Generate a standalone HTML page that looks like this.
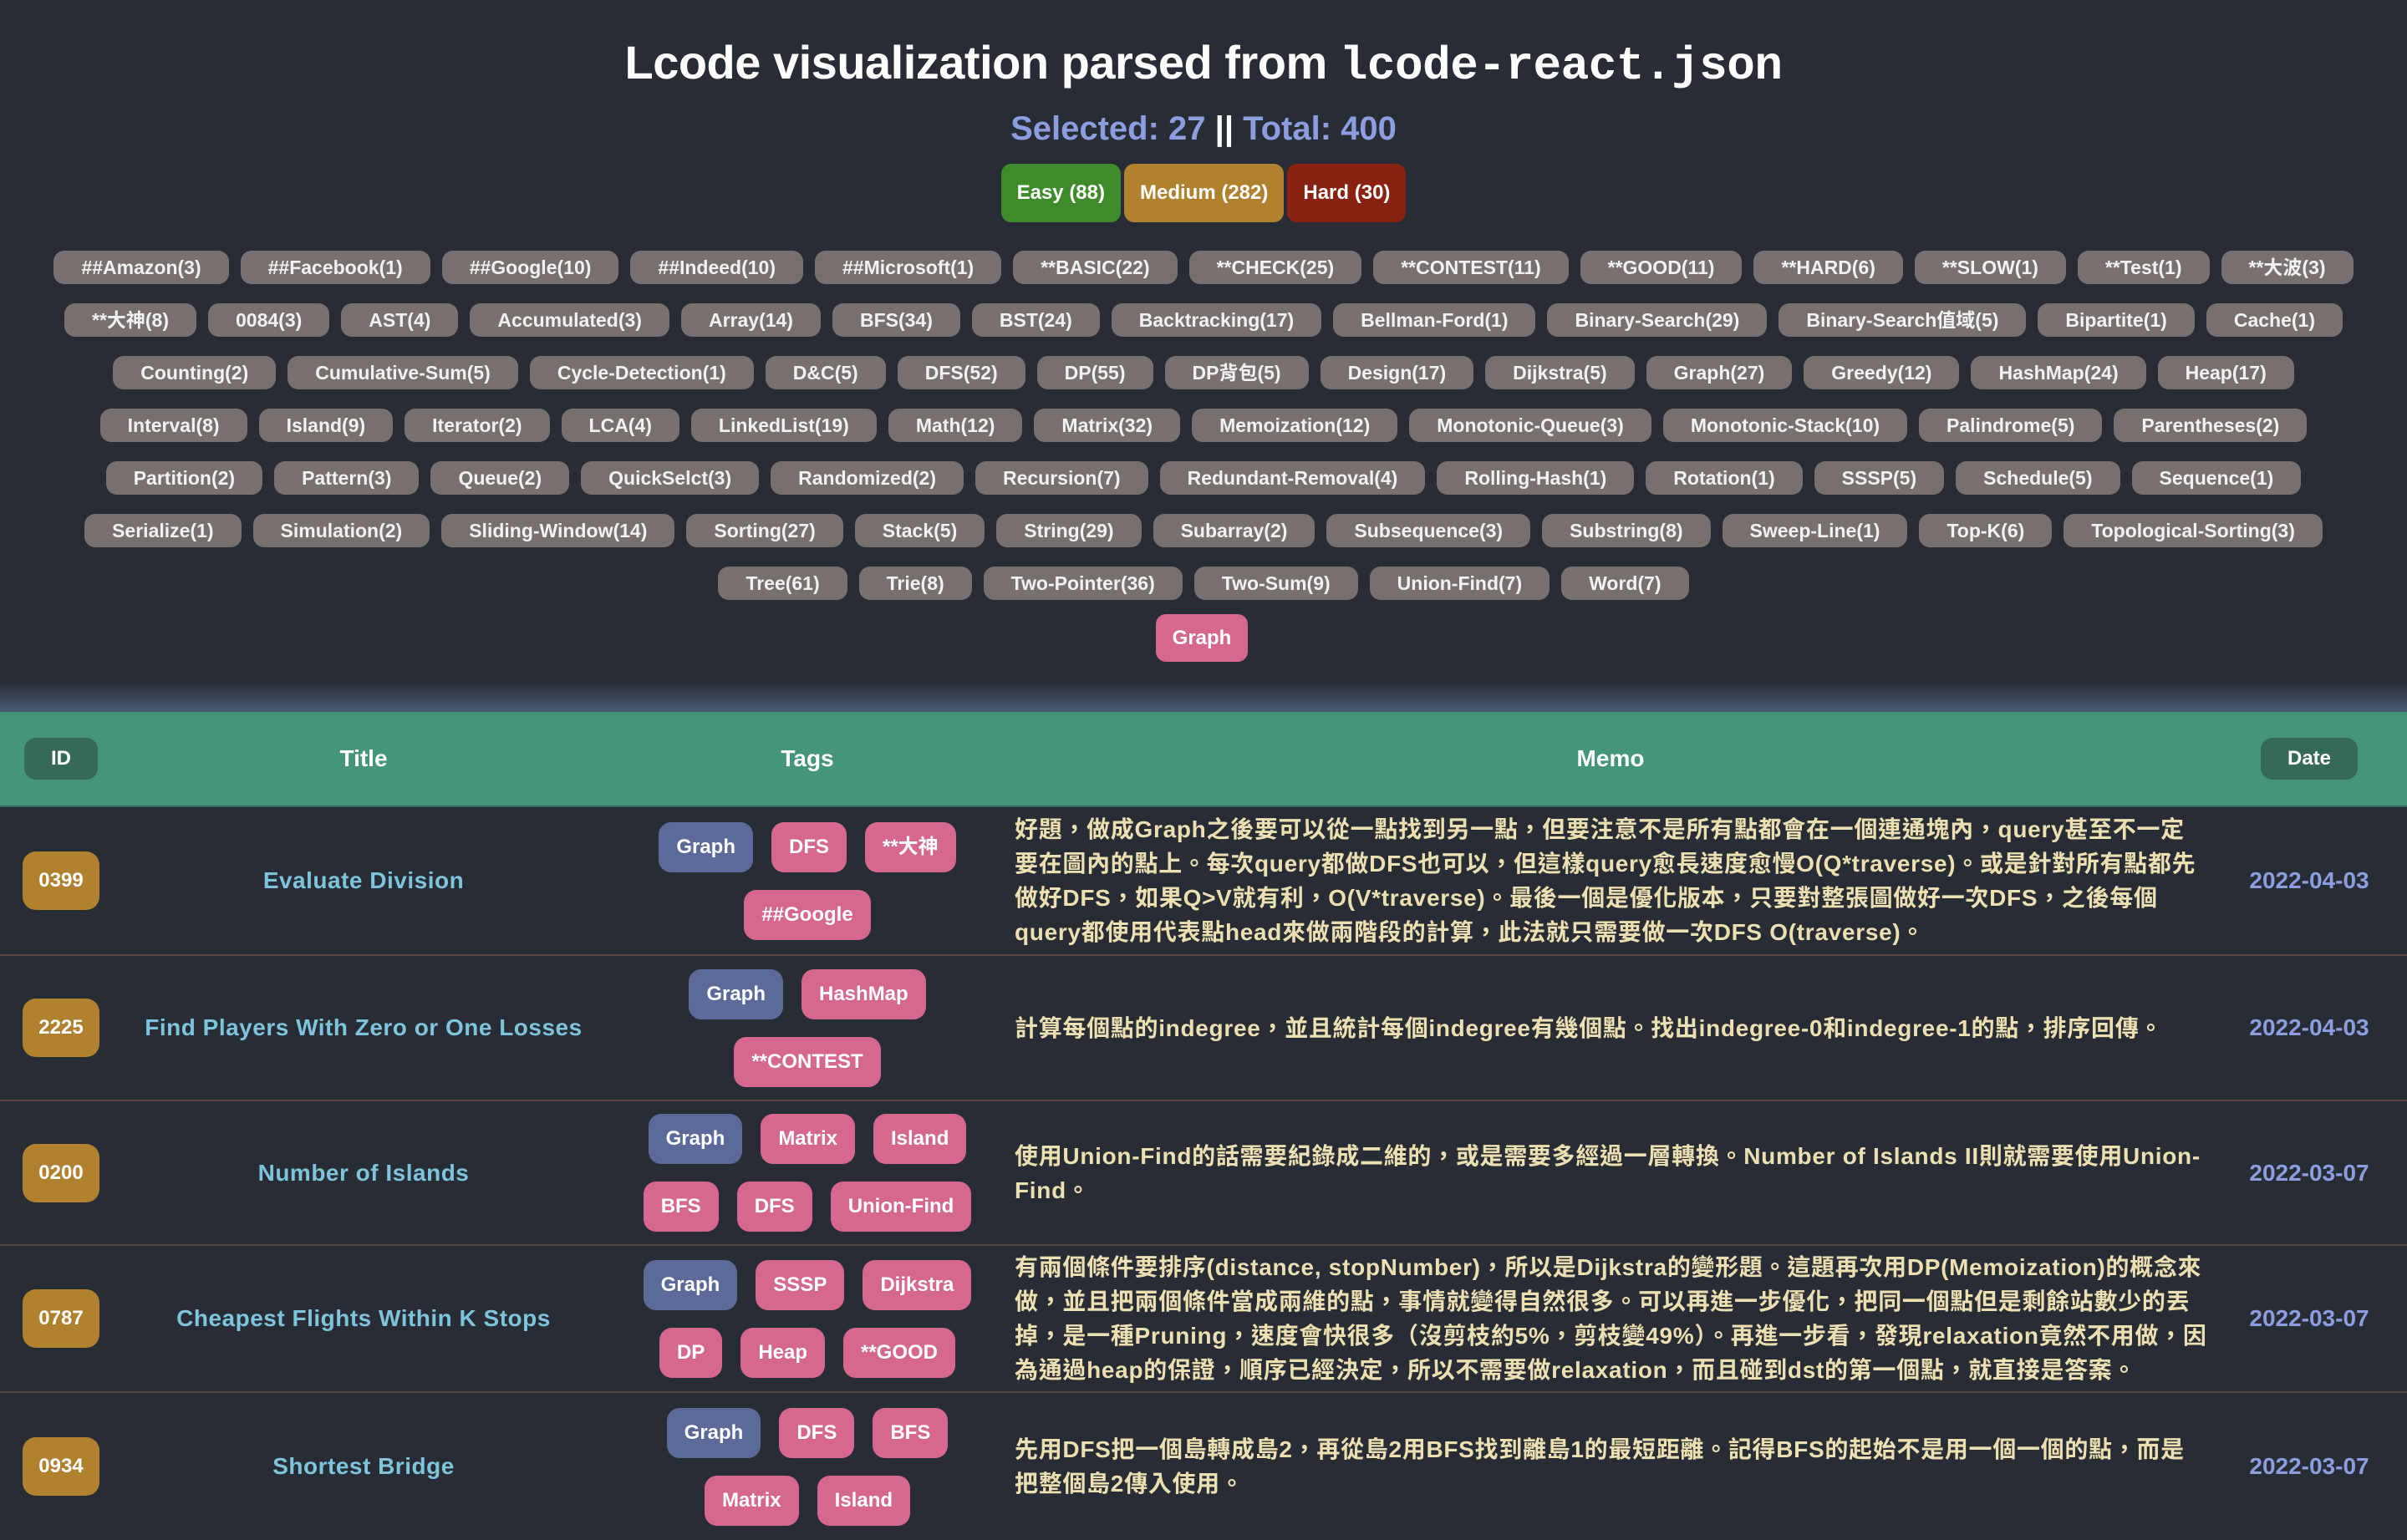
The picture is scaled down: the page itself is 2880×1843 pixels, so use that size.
<!DOCTYPE html>
<html><head><meta charset="utf-8"><style>
*{box-sizing:border-box;margin:0;padding:0}
html,body{width:2880px;height:1800px;overflow:hidden;background:#282c34;font-family:"Liberation Sans","Noto Sans CJK TC",sans-serif;color:#fff}
h1{position:absolute;top:42px;left:0;width:2880px;text-align:center;font-size:56px;font-weight:bold;letter-spacing:-0.5px}
h1 code{font-family:"Liberation Mono",monospace;font-weight:bold}
.sel{position:absolute;top:132px;left:0;width:2880px;text-align:center;font-size:40px;font-weight:bold;color:#8c9ee0}
.sel b{color:#fff}
.diff{position:absolute;top:196px;left:0;width:2880px;display:flex;justify-content:center;gap:4px}
.diff div{height:70px;line-height:70px;padding:0 19px;border-radius:12px;font-size:24px;font-weight:bold}
.tags{position:absolute;top:300px;left:0;width:2880px}
.row{display:flex;justify-content:center;white-space:nowrap;height:40px;margin-bottom:23px}
.row span{background:#77706f;color:#f2f2f2;font-size:23px;font-weight:bold;height:40px;line-height:40px;padding:0 33px;border-radius:13px;margin:0 7px}
.gsel{position:absolute;top:735px;left:1383px;width:110px;height:57px;line-height:57px;text-align:center;background:#d6688f;border-radius:12px;font-size:24px;font-weight:bold}
.glow{position:absolute;top:815px;left:0;width:2880px;height:38px;background:linear-gradient(#282c34,#4c5b78)}
.head{position:absolute;top:852px;left:0;width:2880px;height:114px;background:#45957b;border-bottom:2px solid #3c6b5c}
.c{position:absolute;top:0;height:100%;display:flex;align-items:center;justify-content:center;text-align:center}
.head .c{font-size:28px;font-weight:bold}
.pill{background:#36695a;border-radius:14px;height:50px;line-height:50px;padding:0 32px;font-size:24px}
.c1{left:0;width:146px}.c2{left:146px;width:578px}.c3{left:724px;width:484px}.c4{left:1208px;width:1438px}.c5{left:2646px;width:234px}
.tr{position:absolute;left:0;width:2880px;border-bottom:2px solid #5a4646}
.id{background:#b0822f;border-radius:16px;width:92px;height:70px;line-height:70px;font-size:24px;font-weight:bold}
.t{color:#7ec4dc;font-size:28px;font-weight:bold;letter-spacing:0.5px}
.chips{display:flex;flex-wrap:wrap;justify-content:center;width:440px;gap:21px 22px}
.chips span{height:60px;line-height:60px;padding:0 21px;border-radius:15px;background:#d6688f;font-size:24px;font-weight:bold}
.chips span.g{background:#5c6a9a}
.memo{justify-content:flex-start !important;text-align:left !important;color:#ecdfb1;font-size:28px;font-weight:bold;line-height:41px;white-space:nowrap;padding-left:6px;letter-spacing:0.7px}
.d{color:#8c9ee0;font-size:28px;font-weight:bold}
</style></head><body>
<h1>Lcode visualization parsed from <code>lcode-react.json</code></h1>
<div class="sel">Selected: 27 <b>||</b> Total: 400</div>
<div class="diff"><div style="background:#3f8a2a">Easy (88)</div><div style="background:#b0822f">Medium (282)</div><div style="background:#8a2212">Hard (30)</div></div>
<div class="tags">
<div class="row"><span>##Amazon(3)</span><span>##Facebook(1)</span><span>##Google(10)</span><span>##Indeed(10)</span><span>##Microsoft(1)</span><span>**BASIC(22)</span><span>**CHECK(25)</span><span>**CONTEST(11)</span><span>**GOOD(11)</span><span>**HARD(6)</span><span>**SLOW(1)</span><span>**Test(1)</span><span>**大波(3)</span></div>
<div class="row"><span>**大神(8)</span><span>0084(3)</span><span>AST(4)</span><span>Accumulated(3)</span><span>Array(14)</span><span>BFS(34)</span><span>BST(24)</span><span>Backtracking(17)</span><span>Bellman-Ford(1)</span><span>Binary-Search(29)</span><span>Binary-Search值域(5)</span><span>Bipartite(1)</span><span>Cache(1)</span></div>
<div class="row"><span>Counting(2)</span><span>Cumulative-Sum(5)</span><span>Cycle-Detection(1)</span><span>D&amp;C(5)</span><span>DFS(52)</span><span>DP(55)</span><span>DP背包(5)</span><span>Design(17)</span><span>Dijkstra(5)</span><span>Graph(27)</span><span>Greedy(12)</span><span>HashMap(24)</span><span>Heap(17)</span></div>
<div class="row"><span>Interval(8)</span><span>Island(9)</span><span>Iterator(2)</span><span>LCA(4)</span><span>LinkedList(19)</span><span>Math(12)</span><span>Matrix(32)</span><span>Memoization(12)</span><span>Monotonic-Queue(3)</span><span>Monotonic-Stack(10)</span><span>Palindrome(5)</span><span>Parentheses(2)</span></div>
<div class="row"><span>Partition(2)</span><span>Pattern(3)</span><span>Queue(2)</span><span>QuickSelct(3)</span><span>Randomized(2)</span><span>Recursion(7)</span><span>Redundant-Removal(4)</span><span>Rolling-Hash(1)</span><span>Rotation(1)</span><span>SSSP(5)</span><span>Schedule(5)</span><span>Sequence(1)</span></div>
<div class="row"><span>Serialize(1)</span><span>Simulation(2)</span><span>Sliding-Window(14)</span><span>Sorting(27)</span><span>Stack(5)</span><span>String(29)</span><span>Subarray(2)</span><span>Subsequence(3)</span><span>Substring(8)</span><span>Sweep-Line(1)</span><span>Top-K(6)</span><span>Topological-Sorting(3)</span></div>
<div class="row"><span>Tree(61)</span><span>Trie(8)</span><span>Two-Pointer(36)</span><span>Two-Sum(9)</span><span>Union-Find(7)</span><span>Word(7)</span></div>
</div>
<div class="gsel">Graph</div>
<div class="glow"></div>
<div class="head">
<div class="c c1"><div class="pill">ID</div></div>
<div class="c c2">Title</div>
<div class="c c3">Tags</div>
<div class="c c4" style="justify-content:center">Memo</div>
<div class="c c5"><div class="pill">Date</div></div>
</div>

<div class="tr" style="top:966px;height:178px">
<div class="c c1"><div class="id">0399</div></div>
<div class="c c2 t">Evaluate Division</div>
<div class="c c3"><div class="chips"><span class="g">Graph</span><span>DFS</span><span>**大神</span><span>##Google</span></div></div>
<div class="c c4 memo">好題，做成Graph之後要可以從一點找到另一點，但要注意不是所有點都會在一個連通塊內，query甚至不一定<br>要在圖內的點上。每次query都做DFS也可以，但這樣query愈長速度愈慢O(Q*traverse)。或是針對所有點都先<br>做好DFS，如果Q&gt;V就有利，O(V*traverse)。最後一個是優化版本，只要對整張圖做好一次DFS，之後每個<br>query都使用代表點head來做兩階段的計算，此法就只需要做一次DFS O(traverse)。</div>
<div class="c c5 d">2022-04-03</div>
</div>

<div class="tr" style="top:1144px;height:174px">
<div class="c c1"><div class="id">2225</div></div>
<div class="c c2 t">Find Players With Zero or One Losses</div>
<div class="c c3"><div class="chips"><span class="g">Graph</span><span>HashMap</span><span>**CONTEST</span></div></div>
<div class="c c4 memo">計算每個點的indegree，並且統計每個indegree有幾個點。找出indegree-0和indegree-1的點，排序回傳。</div>
<div class="c c5 d">2022-04-03</div>
</div>

<div class="tr" style="top:1318px;height:173px">
<div class="c c1"><div class="id">0200</div></div>
<div class="c c2 t">Number of Islands</div>
<div class="c c3"><div class="chips"><span class="g">Graph</span><span>Matrix</span><span>Island</span><span>BFS</span><span>DFS</span><span>Union-Find</span></div></div>
<div class="c c4 memo">使用Union-Find的話需要紀錄成二維的，或是需要多經過一層轉換。Number of Islands II則就需要使用Union-<br>Find。</div>
<div class="c c5 d">2022-03-07</div>
</div>

<div class="tr" style="top:1491px;height:176px">
<div class="c c1"><div class="id">0787</div></div>
<div class="c c2 t">Cheapest Flights Within K Stops</div>
<div class="c c3"><div class="chips"><span class="g">Graph</span><span>SSSP</span><span>Dijkstra</span><span>DP</span><span>Heap</span><span>**GOOD</span></div></div>
<div class="c c4 memo">有兩個條件要排序(distance, stopNumber)，所以是Dijkstra的變形題。這題再次用DP(Memoization)的概念來<br>做，並且把兩個條件當成兩維的點，事情就變得自然很多。可以再進一步優化，把同一個點但是剩餘站數少的丟<br>掉，是一種Pruning，速度會快很多（沒剪枝約5%，剪枝變49%）。再進一步看，發現relaxation竟然不用做，因<br>為通過heap的保證，順序已經決定，所以不需要做relaxation，而且碰到dst的第一個點，就直接是答案。</div>
<div class="c c5 d">2022-03-07</div>
</div>

<div class="tr" style="top:1667px;height:176px;border:none">
<div class="c c1"><div class="id">0934</div></div>
<div class="c c2 t">Shortest Bridge</div>
<div class="c c3"><div class="chips"><span class="g">Graph</span><span>DFS</span><span>BFS</span><span>Matrix</span><span>Island</span></div></div>
<div class="c c4 memo">先用DFS把一個島轉成島2，再從島2用BFS找到離島1的最短距離。記得BFS的起始不是用一個一個的點，而是<br>把整個島2傳入使用。</div>
<div class="c c5 d">2022-03-07</div>
</div>
</body></html>
